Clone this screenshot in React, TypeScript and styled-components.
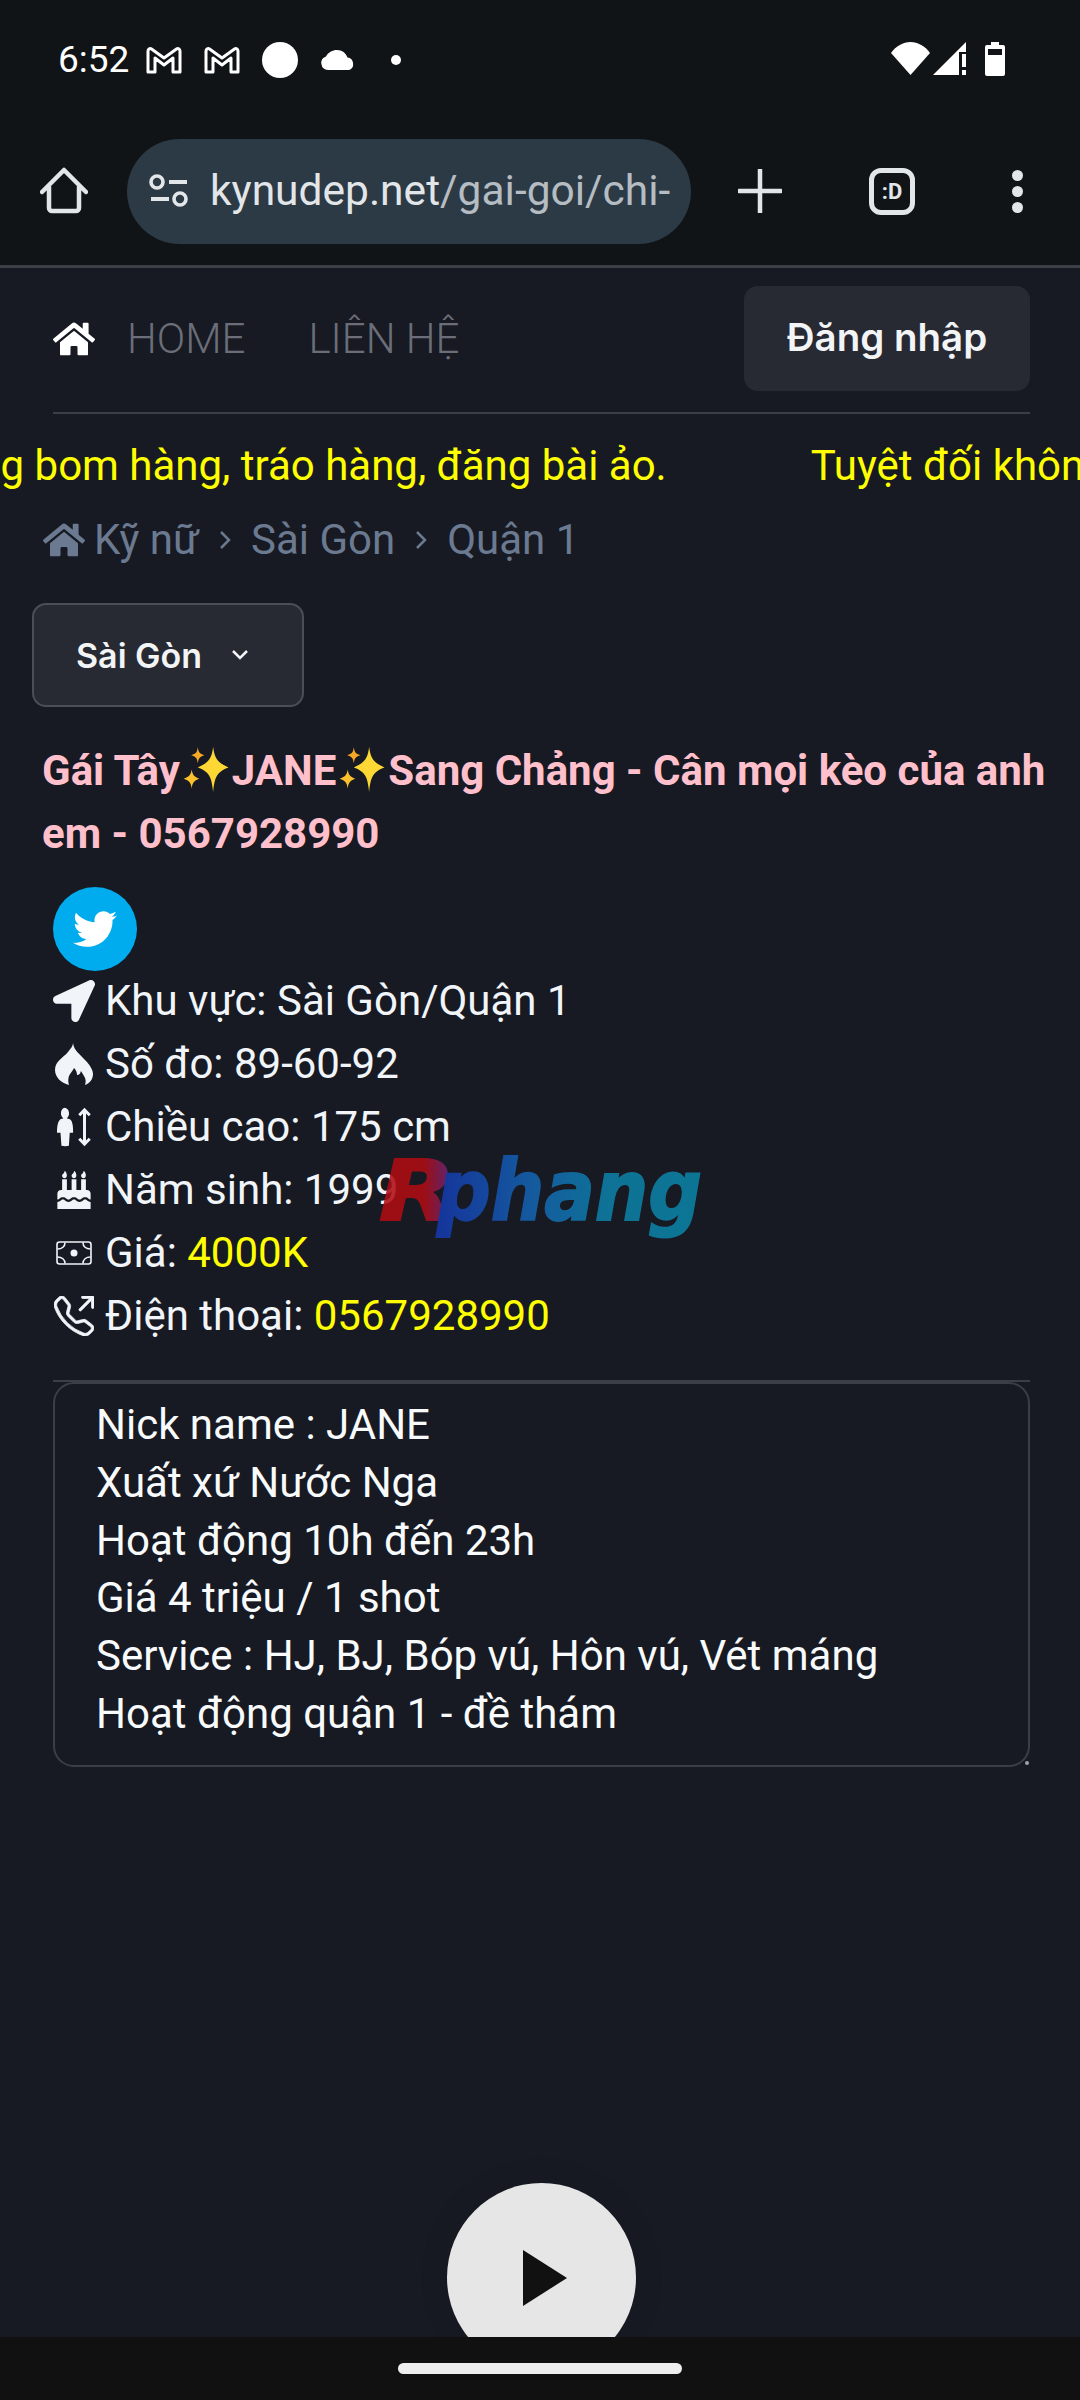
import { Fragment, ReactNode } from "react";
import styled, { createGlobalStyle } from "styled-components";
import { FaBirthdayCake, FaHome, FaLocationArrow, FaTwitter } from "react-icons/fa";
import { BsTelephoneOutbound } from "react-icons/bs";
import { GiBodyHeight } from "react-icons/gi";

const MailIcon = () => (
  <MailSvg viewBox="0 0 36 28">
    <path
      d="M2 5c0-2 2-3 3.500-2L18 12 30.500 3c1.500-1 3.500 0 3.500 2v21h-7V12l-9 7-9-7v14H2z"
      fill="none"
      stroke="#fff"
      strokeWidth="3"
      strokeLinejoin="round"
    />
  </MailSvg>
);

const Sparkles = () => (
  <SparkleSvg viewBox="0 0 46 46">
    <path d="M30 1c1.500 11 4 15 15 20-11 4-13.500 9-15 24-1.500-15-4-20-15-24 11-5 13.500-9 15-20z" fill="#fdd835" />
    <path d="M15 1c.7 5 1.500 6.500 6.500 8-5 1.500-5.800 3-6.500 8-.7-5-1.500-6.500-6.500-8 5-1.500 5.800-3 6.500-8z" fill="#f9a825" />
    <path d="M9 23c.8 5 2 7 7.500 9-5.500 2-6.700 4-7.500 9.500C8.200 36 7 34 1 32c6-2 7.200-4 8-9z" fill="#fbc02d" />
  </SparkleSvg>
);

const FlameIcon = () => (
  <svg width="38" height="42" viewBox="0 0 38 42">
    <path
      d="M18 0c1 8 7 11 12 17 5 5 8 10 8 14 0 5-3 9-8 11 1-3 1-6-1-9l-3-5c-1 3-2 4-4 4 0-3-1-5-3-7-1 3-4 5-5 8-1 3-1 6 0 9-8-2-14-8-14-15 0-9 8-12 13-18 3-4 5-6 5-9z"
      fill="#f1f5f9"
    />
  </svg>
);

const CashIcon = () => (
  <CashSvg viewBox="0 0 36 24">
    <rect x="1" y="1" width="34" height="22" rx="2.500" fill="none" stroke="#f1f5f9" strokeWidth="1.600" />
    <path
      d="M1.500 8C6 8 9 5.500 9 1.500M34.500 8C30 8 27 5.500 27 1.500M1.500 16C6 16 9 18.500 9 22.500M34.500 16C30 16 27 18.500 27 22.500"
      fill="none"
      stroke="#f1f5f9"
      strokeWidth="1.600"
    />
    <circle cx="18" cy="12" r="3.500" fill="#f1f5f9" />
  </CashSvg>
);

const infoRows: { icon: ReactNode; label: string; value?: string }[] = [
  { icon: <FaLocationArrow size={42} />, label: "Khu vực: Sài Gòn/Quận 1" },
  { icon: <FlameIcon />, label: "Số đo: 89-60-92" },
  { icon: <GiBodyHeight size={42} />, label: "Chiều cao: 175 cm" },
  { icon: <FaBirthdayCake size={38} />, label: "Năm sinh: 1999" },
  { icon: <CashIcon />, label: "Giá: ", value: "4000K" },
  {
    icon: <BsTelephoneOutbound size={40} stroke="currentColor" strokeWidth={0.3} />,
    label: "Điện thoại: ",
    value: "0567928990",
  },
];

const description = [
  "Nick name : JANE",
  "Xuất xứ Nước Nga",
  "Hoạt động 10h đến 23h",
  "Giá 4 triệu / 1 shot",
  "Service : HJ, BJ, Bóp vú, Hôn vú, Vét máng",
  "Hoạt động quận 1 - đề thám",
];

const marqueeText = "Tuyệt đối không bom hàng, tráo hàng, đăng bài ảo.";

export default function App() {
  return (
    <Screen>
      <GlobalStyle />
      <StatusBar>
        <StatusLeft>
          <Clock>6:52</Clock>
          <MailIcon />
          <MailIcon />
          <Avatar />
          <svg width="36" height="20" viewBox="0 0 36 20">
            <path
              d="M8 20a7 7 0 0 1-2-13.600C8 2.500 12.500 0 17 0c5 0 9 3 10.500 7.500A6.500 6.500 0 0 1 29 20z"
              fill="#fff"
            />
          </svg>
          <StatusDot />
        </StatusLeft>
        <StatusRight>
          <svg width="39" height="33" viewBox="0 0 39 33">
            <path d="M0 11C5 4 12 0 19.500 0S34 4 39 11L19.500 33z" fill="#fff" />
          </svg>
          <svg width="33" height="33" viewBox="0 0 33 33">
            <path d="M0 33L33 0v10h-7v23z" fill="#fff" />
            <path d="M29 12h4v13h-4zM29 28h4v5h-4z" fill="#fff" />
          </svg>
          <svg width="20" height="34" viewBox="0 0 20 34">
            <path
              d="M6 0h8v3h4a2 2 0 0 1 2 2v27a2 2 0 0 1-2 2H2a2 2 0 0 1-2-2V5a2 2 0 0 1 2-2h4zM3 7v6h14V7z"
              fill="#fff"
              fillRule="evenodd"
            />
          </svg>
        </StatusRight>
      </StatusBar>

      <Toolbar>
        <svg width="48" height="48" viewBox="0 0 48 48">
          <path
            d="M2 25L24 3l22 22M9 20v21a3 3 0 0 0 3 3h24a3 3 0 0 0 3-3V20"
            fill="none"
            stroke="#e3e6e8"
            strokeWidth="4.500"
            strokeLinecap="round"
            strokeLinejoin="round"
          />
        </svg>
        <AddressPill>
          <svg width="40" height="34" viewBox="0 0 40 34">
            <circle cx="8" cy="8" r="6" fill="none" stroke="#e3e6e8" strokeWidth="3.600" />
            <circle cx="31" cy="25" r="6" fill="none" stroke="#e3e6e8" strokeWidth="3.600" />
            <path d="M20 8h18M2 25h18" stroke="#e3e6e8" strokeWidth="4" />
          </svg>
          <AddressText>
            kynudep.net<AddressPath>/gai-goi/chi-</AddressPath>
          </AddressText>
        </AddressPill>
        <ToolbarIcons>
          <svg width="44" height="44" viewBox="0 0 44 44">
            <path d="M22 1v42M1 22h42" stroke="#e3e6e8" strokeWidth="4.500" strokeLinecap="round" />
          </svg>
          <TabCounter>:D</TabCounter>
          <MenuDots>
            <i />
            <i />
            <i />
          </MenuDots>
        </ToolbarIcons>
      </Toolbar>

      <Main>
        <Nav>
          <NavLinks>
            <FaHome size={42} color="#fff" />
            <NavLink>HOME</NavLink>
            <NavLink>LIÊN HỆ</NavLink>
          </NavLinks>
          <LoginButton>Đăng nhập</LoginButton>
        </Nav>

        <Marquee>
          <MarqueeTrack>
            <span>{marqueeText}</span>
            <span>{marqueeText}</span>
          </MarqueeTrack>
        </Marquee>

        <Breadcrumb>
          <FaHome size={42} />
          {["Kỹ nữ", "Sài Gòn", "Quận 1"].map((item, i) => (
            <Fragment key={item}>
              {i > 0 && (
                <CrumbChevron viewBox="0 0 14 22">
                  <path d="M3 3l8 8-8 8" fill="none" stroke="#6b7a90" strokeWidth="2.500" />
                </CrumbChevron>
              )}
              <span>{item}</span>
            </Fragment>
          ))}
        </Breadcrumb>

        <CitySelect>
          Sài Gòn
          <svg width="20" height="14" viewBox="0 0 20 14">
            <path d="M3 3l7 7 7-7" fill="none" stroke="#f3f4f6" strokeWidth="2.500" />
          </svg>
        </CitySelect>

        <Title>
          Gái Tây
          <Sparkles />
          JANE
          <Sparkles />
          Sang Chảng - Cân mọi kèo của anh em - 0567928990
        </Title>

        <TwitterBadge>
          <FaTwitter size={44} color="#fff" />
        </TwitterBadge>

        <InfoList>
          {infoRows.map((row) => (
            <InfoRow key={row.label}>
              <InfoIcon>{row.icon}</InfoIcon>
              <span>
                {row.label}
                {row.value && <Highlight>{row.value}</Highlight>}
              </span>
            </InfoRow>
          ))}
          <Watermark viewBox="0 0 324 90">
            <defs>
              <linearGradient id="rGrad" x1="0" x2="1" y1="0" y2="0">
                <stop offset="0.6" stopColor="#b00d13" />
                <stop offset="1" stopColor="#5a2a90" />
              </linearGradient>
              <linearGradient id="phangGrad" x1="0" x2="1" y1="0" y2="0">
                <stop offset="0" stopColor="#1538ac" />
                <stop offset="0.4" stopColor="#1468b0" />
                <stop offset="0.65" stopColor="#0d80a6" />
                <stop offset="1" stopColor="#0b82a4" />
              </linearGradient>
            </defs>
            <LogoText
              x="0"
              y="65"
              fontSize="84"
              fill="url(#rGrad)"
              stroke="url(#rGrad)"
              textLength="76"
              lengthAdjust="spacingAndGlyphs"
            >
              R
            </LogoText>
            <LogoText
              x="58"
              y="65"
              fontSize="84"
              fill="url(#phangGrad)"
              stroke="url(#phangGrad)"
              textLength="265"
              lengthAdjust="spacingAndGlyphs"
            >
              phang
            </LogoText>
          </Watermark>
        </InfoList>

        <Divider />

        <DescriptionBox>
          {description.map((line) => (
            <div key={line}>{line}</div>
          ))}
        </DescriptionBox>

        <PlayButton>
          <svg width="44" height="56" viewBox="0 0 44 56">
            <path d="M0 0l44 28L0 56z" fill="#111" />
          </svg>
        </PlayButton>
      </Main>

      <GestureBar>
        <GestureHandle />
      </GestureBar>
    </Screen>
  );
}

const GlobalStyle = createGlobalStyle`
  * {
    box-sizing: border-box;
  }

  body {
    margin: 0;
    background: #171a23;
    font-family: Roboto, "Noto Sans", sans-serif;
  }
`;

const Screen = styled.div`
  width: 1080px;
  height: 2400px;
  display: flex;
  flex-direction: column;
  overflow: hidden;
  background: #171a23;
`;

const StatusBar = styled.div`
  height: 122px;
  padding: 42px 75px 0 58px;
  display: flex;
  align-items: flex-start;
  justify-content: space-between;
  background: #101416;
`;

const StatusLeft = styled.div`
  height: 36px;
  display: flex;
  align-items: center;
`;

const Clock = styled.span`
  width: 88px;
  color: #fff;
  font-size: 37px;
  font-weight: 400;
  line-height: 36px;
`;

const MailSvg = styled.svg`
  width: 36px;
  height: 28px;
  margin-right: 22px;
`;

const Avatar = styled.span`
  width: 36px;
  height: 36px;
  margin-right: 22px;
  border-radius: 50%;
  background: #fff;
`;

const StatusDot = styled.span`
  width: 10px;
  height: 10px;
  margin-left: 35px;
  border-radius: 50%;
  background: #fff;
`;

const StatusRight = styled.div`
  display: flex;
  align-items: flex-start;
  gap: 3px;

  & > svg:last-child {
    margin-left: 16px;
  }
`;

const Toolbar = styled.div`
  height: 146px;
  padding: 17px 40px 22px 40px;
  display: flex;
  align-items: center;
  gap: 39px;
  background: #101416;
  border-bottom: 3px solid #3b4047;
`;

const AddressPill = styled.div`
  width: 564px;
  height: 105px;
  padding: 0 20px 0 22px;
  display: flex;
  align-items: center;
  gap: 21px;
  border-radius: 53px;
  background: #2c3a46;
  overflow: hidden;
`;

const AddressText = styled.div`
  flex: 1;
  min-width: 0;
  overflow: hidden;
  white-space: nowrap;
  color: #e3e6e8;
  font-size: 42.500px;
  line-height: 50px;
`;

const AddressPath = styled.span`
  color: #b5bcc2;
`;

const ToolbarIcons = styled.div`
  display: flex;
  align-items: center;
  margin-left: 8px;

  & > svg {
    margin-right: 87px;
  }
`;

const TabCounter = styled.div`
  width: 46px;
  height: 47px;
  margin-right: 97px;
  display: flex;
  align-items: center;
  justify-content: center;
  border: 5px solid #e3e6e8;
  border-radius: 12px;
  color: #e3e6e8;
  font-size: 22px;
  font-weight: 700;
`;

const MenuDots = styled.div`
  display: flex;
  flex-direction: column;
  gap: 5px;

  & > i {
    width: 11px;
    height: 11px;
    border-radius: 50%;
    background: #e3e6e8;
  }
`;

const Main = styled.main`
  position: relative;
  flex: 1;
  min-height: 0;
  overflow: hidden;
`;

const Nav = styled.nav`
  margin: 0 50px 0 53px;
  padding: 18px 0 21px;
  display: flex;
  align-items: center;
  justify-content: space-between;
  border-bottom: 2px solid #3b3e47;
`;

const NavLinks = styled.div`
  display: flex;
  align-items: center;
  gap: 32px;
`;

const NavLink = styled.span`
  margin-right: 31px;
  color: #6b6e78;
  font-size: 42px;
  font-weight: 300;
`;

const LoginButton = styled.button`
  width: 286px;
  height: 105px;
  padding: 0 0 3px;
  border: 0;
  border-radius: 14px;
  background: #272a33;
  color: #f3f4f6;
  font-family: Inter, sans-serif;
  font-size: 38.500px;
  font-weight: 600;
`;

const Marquee = styled.div`
  margin-top: 20px;
  overflow: hidden;
  color: #ffff00;
  font-size: 42px;
  line-height: 63px;
  white-space: nowrap;
`;

const MarqueeTrack = styled.div`
  display: flex;
  gap: 144px;
  margin-left: -273px;
`;

const Breadcrumb = styled.div`
  height: 63px;
  margin: 11px 0 0 43px;
  display: flex;
  align-items: center;
  gap: 9px;
  color: #6b7a90;
  font-size: 42px;
`;

const CrumbChevron = styled.svg`
  width: 14px;
  height: 22px;
  margin: 0 10px;
`;

const CitySelect = styled.div`
  width: 272px;
  height: 104px;
  margin: 32px 0 0 32px;
  padding: 0 52px 0 42px;
  display: flex;
  align-items: center;
  justify-content: space-between;
  border: 2px solid #4b4e57;
  border-radius: 14px;
  background: #272a33;
  color: #f3f4f6;
  font-family: Inter, sans-serif;
  font-size: 34px;
  font-weight: 600;
`;

const Title = styled.h1`
  margin: 32px 30px 0 42px;
  color: #ffc0cb;
  font-size: 42px;
  font-weight: 700;
  line-height: 63px;
`;

const SparkleSvg = styled.svg`
  width: 48px;
  height: 47px;
  margin: 0 2px;
  vertical-align: -8px;
`;

const TwitterBadge = styled.div`
  width: 84px;
  height: 84px;
  margin: 22px 0 -2px 53px;
  display: flex;
  align-items: center;
  justify-content: center;
  border-radius: 50%;
  background: #00acee;
`;

const InfoList = styled.div`
  position: relative;
  padding-left: 53px;
`;

const InfoRow = styled.div`
  height: 63px;
  display: flex;
  align-items: center;
  gap: 10px;
  color: #f1f5f9;
  font-size: 42px;
`;

const InfoIcon = styled.span`
  width: 42px;
  display: flex;
  justify-content: center;
`;

const Highlight = styled.span`
  color: #ffff00;
`;

const CashSvg = styled.svg`
  width: 36px;
  height: 24px;
`;

const Watermark = styled.svg`
  position: absolute;
  top: 186px;
  left: 379px;
  width: 324px;
  height: 90px;
  opacity: 0.88;
`;

const LogoText = styled.text`
  font-family: "DejaVu Sans", sans-serif;
  font-style: italic;
  font-weight: 700;
  stroke-width: 2px;
`;

const Divider = styled.div`
  height: 2px;
  margin: 33px 50px 0 53px;
  background: #3b3e47;
`;

const DescriptionBox = styled.div`
  position: relative;
  height: 385px;
  margin: 0 50px 0 53px;
  padding: 12px 41px;
  border: 2px solid #3b3e47;
  border-radius: 21px;
  color: #f8fafc;
  font-size: 42px;
  line-height: 57.750px;

  &::after {
    content: "";
    position: absolute;
    right: -1px;
    bottom: 0;
    width: 4px;
    height: 4px;
    border-radius: 50%;
    background: #9ca3af;
  }
`;

const PlayButton = styled.div`
  position: absolute;
  left: 447px;
  bottom: -35px;
  width: 189px;
  height: 189px;
  padding-left: 7px;
  display: flex;
  align-items: center;
  justify-content: center;
  border-radius: 50%;
  background: #e6e6e6;
  box-shadow: 0 0 0 25px rgba(20, 20, 30, 0.12);
`;

const GestureBar = styled.div`
  height: 63px;
  padding-top: 26px;
  display: flex;
  justify-content: center;
  background: #111;
`;

const GestureHandle = styled.div`
  width: 284px;
  height: 11px;
  border-radius: 6px;
  background: #eee;
`;
